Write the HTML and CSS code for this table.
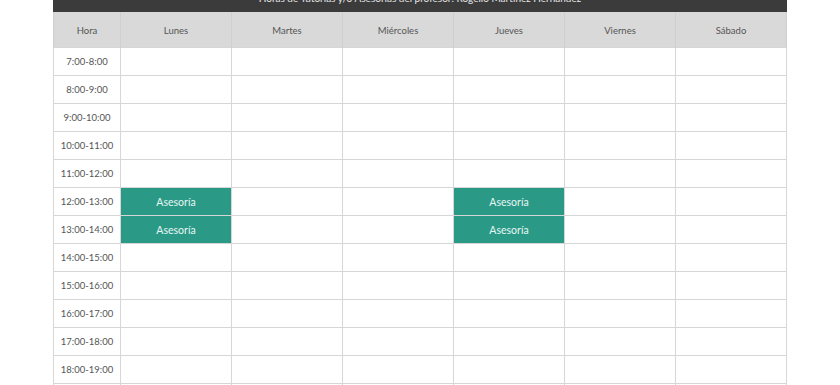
FILE: index.html
```html
<!DOCTYPE html>
<html lang="es">
<head>
<meta charset="utf-8">
<title>Horario</title>
<link rel="stylesheet" href="styles.css">
</head>
<body>
<div class="schedule">
  <div class="title">Horas de Tutorías y/o Asesorías del profesor: Rogelio Martínez Hernández</div>
  <table class="grid">
    <colgroup>
      <col class="c-hora"><col class="c-day"><col class="c-day"><col class="c-day"><col class="c-day"><col class="c-day"><col class="c-day">
    </colgroup>
    <thead>
      <tr><th>Hora</th><th>Lunes</th><th>Martes</th><th>Miércoles</th><th>Jueves</th><th>Viernes</th><th>Sábado</th></tr>
    </thead>
    <tbody>
      <tr><td>7:00-8:00</td><td></td><td></td><td></td><td></td><td></td><td></td></tr>
      <tr><td>8:00-9:00</td><td></td><td></td><td></td><td></td><td></td><td></td></tr>
      <tr><td>9:00-10:00</td><td></td><td></td><td></td><td></td><td></td><td></td></tr>
      <tr><td>10:00-11:00</td><td></td><td></td><td></td><td></td><td></td><td></td></tr>
      <tr><td>11:00-12:00</td><td></td><td></td><td></td><td></td><td></td><td></td></tr>
      <tr><td>12:00-13:00</td><td class="busy">Asesoría</td><td></td><td></td><td class="busy">Asesoría</td><td></td><td></td></tr>
      <tr><td>13:00-14:00</td><td class="busy">Asesoría</td><td></td><td></td><td class="busy">Asesoría</td><td></td><td></td></tr>
      <tr><td>14:00-15:00</td><td></td><td></td><td></td><td></td><td></td><td></td></tr>
      <tr><td>15:00-16:00</td><td></td><td></td><td></td><td></td><td></td><td></td></tr>
      <tr><td>16:00-17:00</td><td></td><td></td><td></td><td></td><td></td><td></td></tr>
      <tr><td>17:00-18:00</td><td></td><td></td><td></td><td></td><td></td><td></td></tr>
      <tr><td>18:00-19:00</td><td></td><td></td><td></td><td></td><td></td><td></td></tr>
      <tr><td>19:00-20:00</td><td></td><td></td><td></td><td></td><td></td><td></td></tr>
    </tbody>
  </table>
</div>
</body>
</html>
```
FILE: styles.css
```css
html, body {
  margin: 0;
  padding: 0;
  background: #ffffff;
  overflow: hidden;
}
body {
  font-family: Lato, "Open Sans", "Liberation Sans", sans-serif;
  color: #444;
}
.schedule {
  width: 734px;
  margin: -14px auto 0;
}
.title {
  height: 26px;
  line-height: 24px;
  background: #3b3b3b;
  color: #e8e8e8;
  font-size: 10px;
  text-align: center;
}
.grid {
  width: 734px;
  border-collapse: collapse;
  table-layout: fixed;
}
.c-hora { width: 67px; }
.c-day { width: 111px; }
.grid th {
  height: 34px;
  padding: 1px 0 0;
  background: #d9d9d9;
  color: #555;
  font-weight: normal;
  font-size: 9.5px;
  border-left: 1px solid #cfcfcf;
  border-right: 1px solid #cfcfcf;
}
.grid td {
  height: 27px;
  padding: 0;
  text-align: center;
  font-size: 9.5px;
  color: #555;
  border: 1px solid #d6d6d6;
}
.grid td.busy {
  background: #2a9a87;
  color: #e9f6f3;
  font-size: 10.5px;
  border-color: #d6d6d6;
}
```
